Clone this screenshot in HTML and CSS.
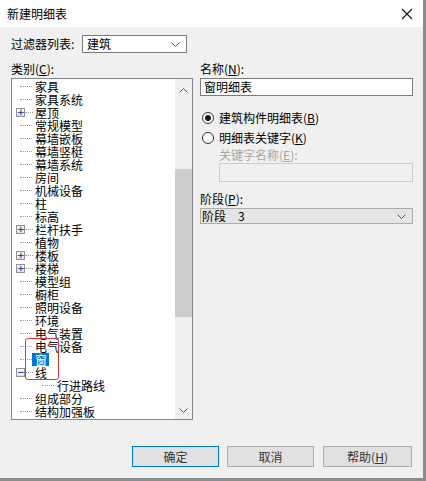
FILE: index.html
```html
<!DOCTYPE html>
<html>
<head>
<meta charset="utf-8">
<link rel="stylesheet" href="styles.css">
</head>
<body>
<div class="window">
  <div class="titlebar">
    <span class="title">新建明细表</span>
    <svg class="close" width="12" height="12" viewBox="0 0 12 12"><path d="M1 1 L11 11 M11 1 L1 11" stroke="#111" stroke-width="1.1" fill="none"/></svg>
  </div>
  <div class="content">
    <div class="filter-row">
      <span class="lbl">过滤器列表:</span>
      <div class="select filter-select"><span>建筑</span><svg class="chev" width="9" height="5" viewBox="0 0 9 5"><path d="M0.5 0.5 L4.5 4.5 L8.5 0.5" stroke="#555" fill="none"/></svg></div>
    </div>
    <div class="main">
      <div class="left">
        <div class="lbl head">类别(<u>C</u>):</div>
        <div class="tree">
          <div class="tree-list">
            <div class="row"><span class="lead"><i class="line"></i></span>家具</div>
            <div class="row"><span class="lead"><i class="line"></i></span>家具系统</div>
            <div class="row"><span class="lead"><b class="box">+</b><i class="line short"></i></span>屋顶</div>
            <div class="row"><span class="lead"><i class="line"></i></span>常规模型</div>
            <div class="row"><span class="lead"><i class="line"></i></span>幕墙嵌板</div>
            <div class="row"><span class="lead"><i class="line"></i></span>幕墙竖梃</div>
            <div class="row"><span class="lead"><i class="line"></i></span>幕墙系统</div>
            <div class="row"><span class="lead"><i class="line"></i></span>房间</div>
            <div class="row"><span class="lead"><i class="line"></i></span>机械设备</div>
            <div class="row"><span class="lead"><i class="line"></i></span>柱</div>
            <div class="row"><span class="lead"><i class="line"></i></span>标高</div>
            <div class="row"><span class="lead"><b class="box">+</b><i class="line short"></i></span>栏杆扶手</div>
            <div class="row"><span class="lead"><i class="line"></i></span>植物</div>
            <div class="row"><span class="lead"><b class="box">+</b><i class="line short"></i></span>楼板</div>
            <div class="row"><span class="lead"><b class="box">+</b><i class="line short"></i></span>楼梯</div>
            <div class="row"><span class="lead"><i class="line"></i></span>模型组</div>
            <div class="row"><span class="lead"><i class="line"></i></span>橱柜</div>
            <div class="row"><span class="lead"><i class="line"></i></span>照明设备</div>
            <div class="row"><span class="lead"><i class="line"></i></span>环境</div>
            <div class="row"><span class="lead"><i class="line"></i></span>电气装置</div>
            <div class="row"><span class="lead"><i class="line"></i></span>电气设备</div>
            <div class="row"><span class="lead"><i class="line"></i></span><span class="sel">窗</span></div>
            <div class="row"><span class="lead"><b class="box">−</b><i class="line short"></i></span>线</div>
            <div class="row"><span class="lead child"><i class="line"></i></span>行进路线</div>
            <div class="row"><span class="lead"><i class="line"></i></span>组成部分</div>
            <div class="row"><span class="lead"><i class="line"></i></span>结构加强板</div>
            <div class="row"><span class="lead"><i class="line"></i></span>结构基础</div>
            <div class="annot"></div>
          </div>
          <div class="scrollbar">
            <svg class="arrow" width="9" height="5" viewBox="0 0 9 5"><path d="M0.5 4.5 L4.5 0.5 L8.5 4.5" stroke="#606060" fill="none"/></svg>
            <div class="track"><div class="thumb"></div></div>
            <svg class="arrow" width="9" height="5" viewBox="0 0 9 5"><path d="M0.5 0.5 L4.5 4.5 L8.5 0.5" stroke="#606060" fill="none"/></svg>
          </div>
        </div>
      </div>
      <div class="right">
        <div class="lbl head">名称(<u>N</u>):</div>
        <div class="input">窗明细表</div>
        <div class="radio-row first"><span class="radio on"><span class="dot"></span></span><span>建筑构件明细表(<u>B</u>)</span></div>
        <div class="radio-row"><span class="radio"></span><span>明细表关键字(<u>K</u>)</span></div>
        <div class="lbl disabled">关键字名称(<u>E</u>):</div>
        <div class="input dis"></div>
        <div class="lbl phase-lbl">阶段(<u>P</u>):</div>
        <div class="select phase-select"><span>阶段　3</span><svg class="chev" width="9" height="5" viewBox="0 0 9 5"><path d="M0.5 0.5 L4.5 4.5 L8.5 0.5" stroke="#555" fill="none"/></svg></div>
      </div>
    </div>
    <div class="buttons">
      <div class="btn default">确定</div>
      <div class="btn">取消</div>
      <div class="btn">帮助(<u>H</u>)</div>
    </div>
  </div>
</div>
</body>
</html>
```
FILE: styles.css
```css
html, body {
  margin: 0;
  padding: 0;
}
body {
  width: 426px;
  height: 481px;
  overflow: hidden;
  font-family: "Noto Sans CJK SC", "Liberation Sans", sans-serif;
  font-size: 12px;
  color: #000;
}
.window {
  box-sizing: border-box;
  width: 426px;
  height: 481px;
  background: #f0f0f0;
  border-right: 3px solid #8c8c8c;
  border-bottom: 3px solid #8c8c8c;
  display: flex;
  flex-direction: column;
}
.titlebar {
  height: 27px;
  background: #fff;
  display: flex;
  align-items: center;
  justify-content: space-between;
  padding: 0 10px 0 7px;
  flex: none;
}
.title {
  font-size: 12px;
  line-height: 14px;
}
.close {
  display: block;
}
.content {
  padding: 8px 0 0 11px;
}
.lbl {
  line-height: 14px;
  white-space: nowrap;
}
u {
  text-decoration: underline;
  text-underline-offset: 1px;
}
.filter-row {
  display: flex;
  align-items: center;
  height: 18px;
}
.filter-row .lbl {
  width: 71px;
}
.select {
  box-sizing: border-box;
  display: flex;
  align-items: center;
  justify-content: space-between;
  border: 1px solid #7a7a7a;
  background: #fff;
  padding: 0 6px 0 4px;
  line-height: 14px;
}
.filter-select {
  width: 105px;
  height: 18px;
}
.chev {
  display: block;
}
.main {
  display: flex;
  margin-top: 8px;
  gap: 7px;
}
.left {
  width: 182px;
  display: flex;
  flex-direction: column;
}
.head {
  height: 17px;
  line-height: 16px;
}
.tree {
  box-sizing: border-box;
  height: 342px;
  border: 1px solid #828790;
  background: #fff;
  display: flex;
  overflow: hidden;
}
.tree-list {
  flex: 1;
  position: relative;
  padding-top: 1px;
}
.row {
  height: 13px;
  line-height: 13px;
  display: flex;
  align-items: center;
  white-space: nowrap;
}
.lead {
  width: 23px;
  height: 13px;
  display: flex;
  align-items: center;
  flex: none;
}
.lead.child {
  width: 45px;
}
.line {
  display: block;
  margin-left: 8px;
  width: 12px;
  height: 0;
  border-top: 1px dotted #a0a0a0;
}
.lead.child .line {
  margin-left: 30px;
}
.line.short {
  margin-left: 0;
  width: 8px;
}
.box {
  box-sizing: border-box;
  margin-left: 4px;
  width: 9px;
  height: 9px;
  border: 1px solid #919191;
  background: linear-gradient(#ffffff, #e0e0e0);
  color: #1e4fa8;
  font-size: 9px;
  line-height: 7px;
  font-weight: bold;
  text-align: center;
  font-family: "DejaVu Sans", sans-serif;
  flex: none;
}
.sel {
  background: #0078d7;
  color: #fff;
  margin-left: -3px;
  padding: 0 2px 0 3px;
  line-height: 13px;
}
.annot {
  position: absolute;
  left: 13px;
  top: 259px;
  width: 34px;
  height: 42px;
  box-sizing: border-box;
  border: 1px solid #e0333a;
  border-radius: 3px;
}
.scrollbar {
  width: 17px;
  flex: none;
  background: #f0f0f0;
  display: flex;
  flex-direction: column;
  align-items: center;
  padding: 9px 0 6px;
  box-sizing: border-box;
}
.track {
  flex: 1;
  width: 17px;
  padding-top: 76px;
  box-sizing: border-box;
}
.thumb {
  width: 17px;
  height: 148px;
  background: #cdcdcd;
}
.arrow {
  display: block;
  flex: none;
}
.right {
  width: 213px;
  display: flex;
  flex-direction: column;
}
.input {
  box-sizing: border-box;
  height: 18px;
  border: 1px solid #7a7a7a;
  background: #fff;
  padding: 0 3px;
  line-height: 16px;
}
.input.dis {
  margin-left: 19px;
  height: 19px;
  background: #f0f0f0;
  border-color: #cccccc;
}
.radio-row {
  display: flex;
  align-items: center;
  height: 14px;
  line-height: 14px;
  gap: 5px;
  margin-top: 6px;
  padding-left: 2px;
}
.radio-row.first {
  margin-top: 15px;
}
.radio {
  box-sizing: border-box;
  width: 12px;
  height: 12px;
  border: 1px solid #333;
  border-radius: 50%;
  background: #fff;
  display: flex;
  align-items: center;
  justify-content: center;
}
.dot {
  width: 6px;
  height: 6px;
  border-radius: 50%;
  background: #1a1a1a;
}
.disabled {
  color: #a6a6a6;
  margin-left: 19px;
  margin-top: 3px;
  line-height: 14px;
  height: 15px;
}
.phase-lbl {
  margin-top: 10px;
  height: 16px;
  line-height: 14px;
}
.phase-select {
  height: 16px;
  background: #e5e5e5;
  border-color: #acacac;
  padding-left: 1px;
}
.buttons {
  display: flex;
  gap: 8px;
  margin-top: 26px;
  padding-left: 121px;
}
.btn {
  box-sizing: border-box;
  width: 87px;
  height: 21px;
  border: 1px solid #adadad;
  background: #e1e1e1;
  text-align: center;
  line-height: 19px;
  color: #333;
}
.btn.default {
  border-color: #0078d7;
}
.btn:last-child {
  width: 89px;
  margin-left: 1px;
}
```
